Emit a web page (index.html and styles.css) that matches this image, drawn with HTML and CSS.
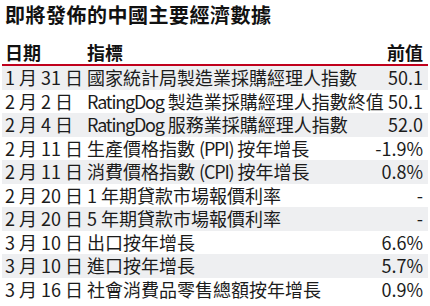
FILE: index.html
```html
<!DOCTYPE html>
<html lang="zh-Hant">
<head>
<meta charset="utf-8">
<link rel="stylesheet" href="styles.css">
</head>
<body>
<div class="panel">
  <h1 class="title">即將發佈的中國主要經濟數據</h1>
  <table class="data">
    <thead>
      <tr><th class="c-date">日期</th><th class="c-name">指標</th><th class="c-val">前值</th></tr>
    </thead>
    <tbody>
      <tr><td class="c-date">1 月 31 日</td><td class="c-name">國家統計局製造業採購經理人指數</td><td class="c-val">50.1</td></tr>
      <tr><td class="c-date">2 月 2 日</td><td class="c-name"><span class="en">RatingDog</span> 製造業採購經理人指數終值</td><td class="c-val">50.1</td></tr>
      <tr><td class="c-date">2 月 4 日</td><td class="c-name"><span class="en">RatingDog</span> 服務業採購經理人指數</td><td class="c-val">52.0</td></tr>
      <tr><td class="c-date">2 月 11 日</td><td class="c-name">生產價格指數 <span class="en">(PPI)</span> 按年增長</td><td class="c-val">-1.9%</td></tr>
      <tr><td class="c-date">2 月 11 日</td><td class="c-name">消費價格指數 <span class="en">(CPI)</span> 按年增長</td><td class="c-val">0.8%</td></tr>
      <tr><td class="c-date">2 月 20 日</td><td class="c-name">1 年期貸款市場報價利率</td><td class="c-val">-</td></tr>
      <tr><td class="c-date">2 月 20 日</td><td class="c-name">5 年期貸款市場報價利率</td><td class="c-val">-</td></tr>
      <tr><td class="c-date">3 月 10 日</td><td class="c-name">出口按年增長</td><td class="c-val">6.6%</td></tr>
      <tr><td class="c-date">3 月 10 日</td><td class="c-name">進口按年增長</td><td class="c-val">5.7%</td></tr>
      <tr><td class="c-date">3 月 16 日</td><td class="c-name">社會消費品零售總額按年增長</td><td class="c-val">0.9%</td></tr>
    </tbody>
  </table>
</div>
</body>
</html>
```
FILE: styles.css
```css
html, body {
  margin: 0;
  padding: 0;
  background: #ffffff;
}
body {
  font-family: "Noto Sans CJK TC", sans-serif;
  color: #1c1c1c;
  width: 430px;
  height: 306px;
  overflow: hidden;
}
.panel {
  padding: 0 2px;
}
.title {
  margin: 0;
  height: 30px;
  line-height: 30px;
  font-size: 20px;
  letter-spacing: 0.5px;
  font-weight: 700;
  padding-left: 3px;
  color: #111;
}
.data {
  width: 426px;
  margin-top: 10px;
  border-collapse: collapse;
  table-layout: fixed;
  font-size: 18px;
}
.data th {
  height: 24px;
  padding: 0;
  font-weight: 700;
  border-bottom: 2px solid #c0001c;
  vertical-align: middle;
  line-height: 24px;
  color: #111;
}
.data td {
  height: 23.5px;
  padding: 0;
  line-height: 23.5px;
  white-space: nowrap;
  vertical-align: middle;
}
.data tbody tr:nth-child(odd) td {
  background: #eeeff1;
}
.en {
  letter-spacing: -1.2px;
}
.c-date {
  width: 82px;
  text-align: left;
  padding-left: 3px !important;
  box-sizing: border-box;
}
.c-name {
  text-align: left;
  padding-left: 3px !important;
}
.c-val {
  width: 60px;
  text-align: right;
  padding-right: 5px !important;
  box-sizing: border-box;
}
```
